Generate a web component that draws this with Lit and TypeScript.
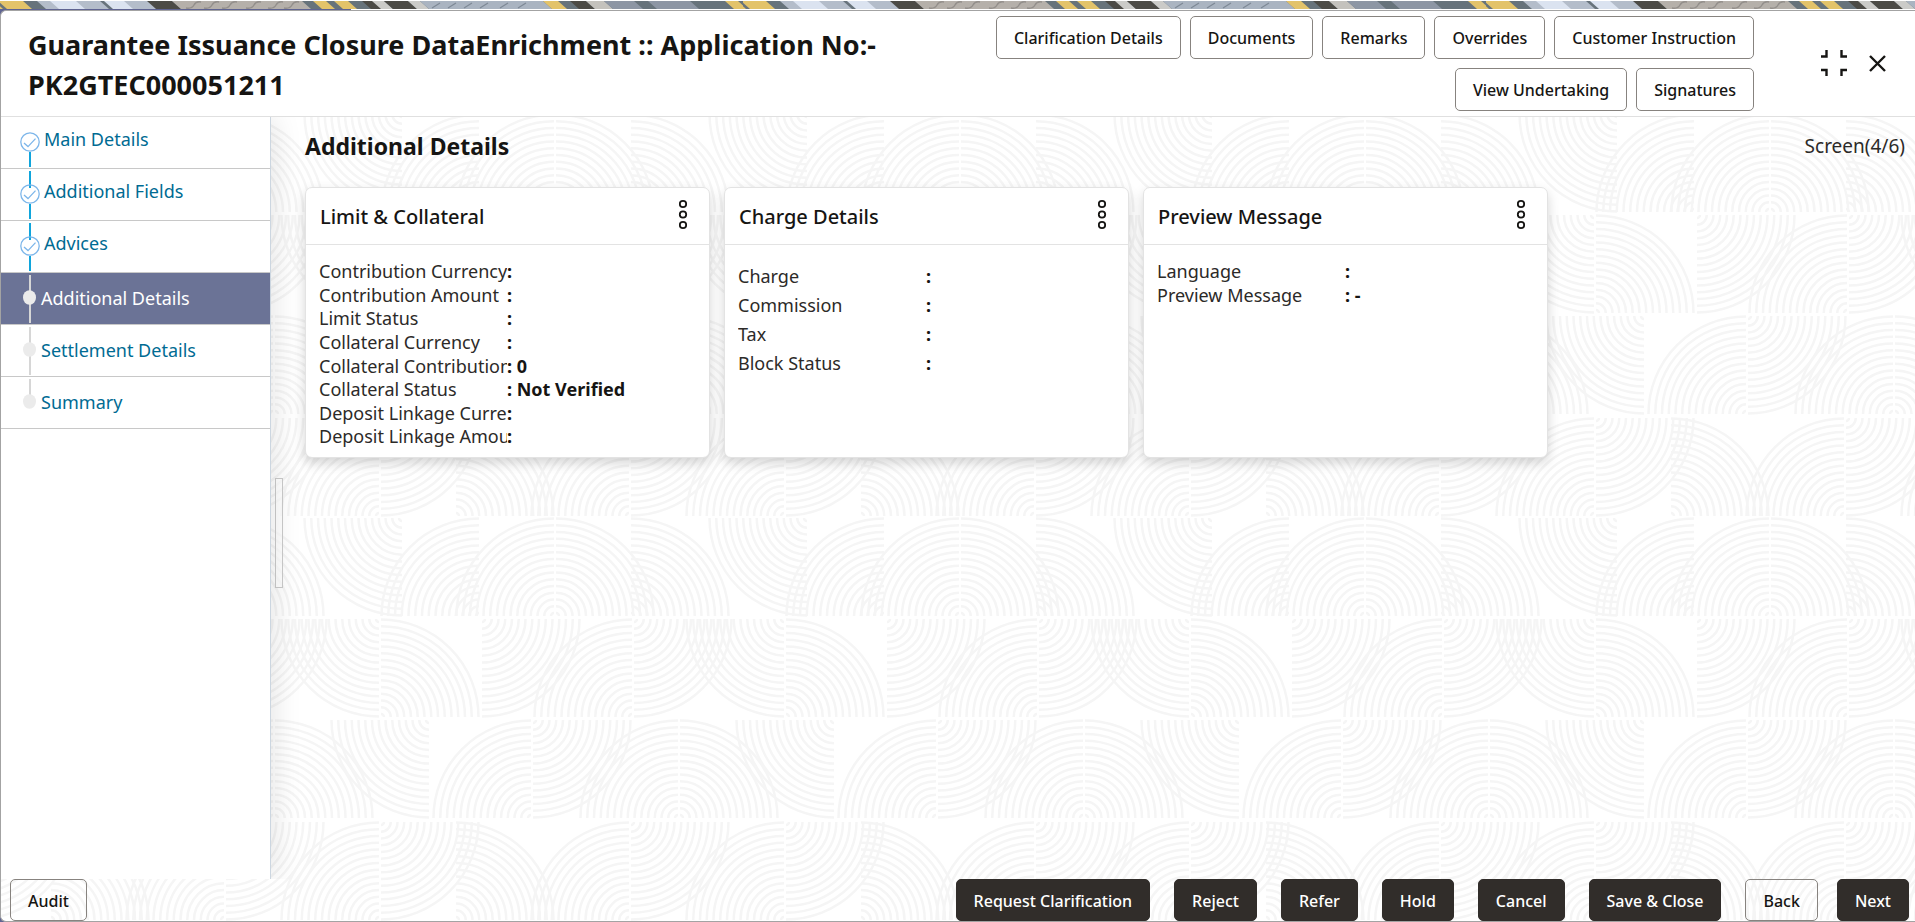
import { LitElement, html, svg, css, nothing } from "lit";
import { customElement, property } from "lit/decorators.js";
import { classMap } from "lit/directives/class-map.js";

type StepState = "done" | "active" | "pending";
interface Step { label: string; state: StepState }
interface Row { label: string; value: string }
interface Card { title: string; rows: Row[]; roomy?: boolean }

const STEPS: Step[] = [
  { label: "Main Details", state: "done" },
  { label: "Additional Fields", state: "done" },
  { label: "Advices", state: "done" },
  { label: "Additional Details", state: "active" },
  { label: "Settlement Details", state: "pending" },
  { label: "Summary", state: "pending" },
];

const CARDS: Card[] = [
  {
    title: "Limit & Collateral",
    rows: [
      { label: "Contribution Currency", value: "" },
      { label: "Contribution Amount", value: "" },
      { label: "Limit Status", value: "" },
      { label: "Collateral Currency", value: "" },
      { label: "Collateral Contribution", value: "0" },
      { label: "Collateral Status", value: "Not Verified" },
      { label: "Deposit Linkage Currency", value: "" },
      { label: "Deposit Linkage Amount", value: "" },
    ],
  },
  {
    title: "Charge Details",
    roomy: true,
    rows: [
      { label: "Charge", value: "" },
      { label: "Commission", value: "" },
      { label: "Tax", value: "" },
      { label: "Block Status", value: "" },
    ],
  },
  {
    title: "Preview Message",
    rows: [
      { label: "Language", value: "" },
      { label: "Preview Message", value: "-" },
    ],
  },
];

const TOOLBAR = [
  "Clarification Details", "Documents", "Remarks", "Overrides",
  "Customer Instruction", "View Undertaking", "Signatures",
];
const ACTIONS = ["Request Clarification", "Reject", "Refer", "Hold", "Cancel", "Save & Close"];

/* Quarter fans of the backdrop: centre x, centre y, direction of each axis. */
const TILE = 405;
const FANS: [number, number, number, number][] = [
  [112, 1, -1, 1], [189, 99, -1, -1], [264, 99, -1, -1], [266, 99, 1, -1], [341, 99, 1, -1],
  [89, 102, -1, 1], [91, 200, 1, -1], [192, 102, 1, 1], [342, 200, -1, -1], [344, 102, 1, 1],
  [139, 203, -1, 1], [241, 301, -1, -1], [243, 203, 1, 1], [388, 301, -1, -1], [390, 301, 1, -1],
  [89, 403, -1, -1], [91, 305, 1, 1], [166, 403, 1, -1], [339, 403, -1, -1], [341, 305, 1, 1],
];
const RADII = Array.from({ length: 15 }, (_, i) => 3 + i * 6.75);

@customElement("line-backdrop")
class LineBackdrop extends LitElement {
  static styles = css`
    :host { display: block; overflow: hidden; }
    .art { display: block; width: 100%; height: 100%; }
    .arc { fill: none; stroke: #f5f5f5; stroke-width: 2.5; }
  `;
  render() {
    const fan = ([x, y, sx, sy]: number[], shift: number) => svg`
      <g transform="translate(${x + shift} ${y}) scale(${sx} ${sy})">
        ${RADII.map(r => svg`<path class="arc" d="M${r} 0A${r} ${r} 0 0 1 0 ${r}"></path>`)}
      </g>`;
    return html`
      <svg class="art" aria-hidden="true">
        <defs>
          <pattern id="fans" x="289" y="-4" width=${TILE} height="404" patternUnits="userSpaceOnUse">
            ${FANS.map(f => [fan(f, 0), fan(f, -TILE), fan(f, TILE)])}
          </pattern>
        </defs>
        <rect width="100%" height="100%" fill="url(#fans)"></rect>
      </svg>`;
  }
}

/* Slanted bands of the banner strip: start, end, colour. */
const BANDS: [number, number, string][] = [
  [-18, -6, "#e3c36a"], [-2, 23, "#e3c36a"], [37, 100, "#b4bdca"], [50, 76, "#dbe3f0"],
  [104, 128, "#dbe3f0"], [124, 150, "#b4bdca"], [147, 172, "#4c4b46"], [172, 302, "#b5b0aa"],
  [313, 326, "#e3c36a"], [334, 348, "#e3c36a"], [362, 374, "#4c4b46"], [372, 384, "#cbcbc8"],
  [384, 408, "#4c4b46"], [408, 420, "#cbcbc8"], [420, 543, "#aab4c1"], [543, 558, "#e3c36a"],
  [570, 586, "#4c4b46"], [586, 604, "#c4c2bd"], [604, 634, "#8d96a4"], [648, 690, "#8d96a4"],
  [725, 738, "#e3c36a"],
];

@customElement("banner-strip")
class BannerStrip extends LitElement {
  static styles = css`
    :host { display: block; height: 9px; padding-top: 1px; background: #fff; box-sizing: border-box; }
    .art { display: block; width: 100%; height: 8px; }
    .mark { fill: none; stroke: #938f8b; stroke-width: 1.4; }
    .dash { stroke: #7e8996; stroke-width: 1.2; }
  `;
  render() {
    return html`
      <svg class="art" aria-hidden="true">
        <defs>
          <pattern id="bands" width="743" height="8" patternUnits="userSpaceOnUse">
            <rect width="743" height="8" fill="#67737b"></rect>
            ${BANDS.map(([a, b, c]) => svg`<path d="M${a} 0H${b}L${b + 9} 8H${a + 9}Z" fill=${c}></path>`)}
            ${[186, 204, 222, 246, 268, 284].map(x => svg`<path class="mark" d="M${x} 7q6 1 8-3t7-3"></path>`)}
            ${[432, 448, 464, 480, 500, 518].map(x => svg`<path class="dash" d="M${x} 7l8-5"></path>`)}
          </pattern>
        </defs>
        <rect width="100%" height="8" fill="url(#bands)"></rect>
      </svg>`;
  }
}

@customElement("step-item")
class StepItem extends LitElement {
  @property() label = "";
  @property() state: StepState = "pending";
  @property({ type: Boolean }) first = false;
  @property({ type: Boolean }) last = false;

  static styles = css`
    :host { display: block; }
    .step {
      display: flex; height: 51px; padding-left: 19px; border-bottom: 1px solid #c8c8c8;
      font-size: 18px; line-height: 24px; color: #006b93; text-decoration: none;
    }
    .text { padding: 13px 0 0 1px; }
    .done .text { padding: 10px 0 0 4px; }
    .active { background: #6b7396; color: #fff; }
    .mark { flex: none; }
    .rail { stroke: #d6d6d6; stroke-width: 2; }
    .done .rail { stroke: #10a5dc; }
    .dot { fill: #ebebeb; }
    .ring { fill: none; stroke: #7db6ea; stroke-width: 1.3; }
  `;
  render() {
    const done = this.state === "done";
    return html`
      <a href="#" class=${classMap({ step: true, [this.state]: true })}
         aria-current=${this.state === "active" ? "step" : nothing}>
        <svg class="mark" width="20" height="51" aria-hidden="true">
          ${done
            ? svg`
              ${this.first ? nothing : svg`<path class="rail" d="M10 2V19"></path>`}
              <path class="rail" d="M10 35V50"></path>
              <circle class="ring" cx="10" cy="25" r="9.2"></circle>
              <path class="ring" d="M4 26l4 3.6 7.500-8"></path>`
            : svg`
              <path class="rail" d="M10 2V${this.last ? 20 : 50}"></path>
              <ellipse class="dot" cx="9.500" cy="24.500" rx="6.500" ry="7.300"></ellipse>`}
        </svg>
        <span class="text">${this.label}</span>
      </a>`;
  }
}

@customElement("summary-card")
class SummaryCard extends LitElement {
  @property({ attribute: false }) card!: Card;

  static styles = css`
    :host {
      display: flex; flex-direction: column; box-sizing: border-box; min-height: 270px;
      background: #fff; border: 1px solid #e3e3e3; border-radius: 7px;
      box-shadow: 0 5px 12px rgba(0, 0, 0, 0.17);
    }
    .head {
      display: flex; justify-content: space-between; align-items: flex-start;
      height: 56px; padding: 0 14px; border-bottom: 1px solid #e3e3e3;
    }
    .title { margin: 14px 0 0; font-size: 20px; line-height: 30px; font-weight: 500; }
    .menu { margin-top: 8px; padding: 0; border: 0; background: none; display: flex; }
    .bead { fill: none; stroke: #161513; stroke-width: 1.8; }
    .rows {
      display: grid; grid-template-rows: repeat(8, 1fr); height: 189px;
      margin: 0; padding: 15px 14px 6px 13px; font-size: 18px; line-height: 23px;
    }
    .row { display: grid; grid-template-columns: 188px 1fr; }
    .roomy { display: block; padding-top: 17px; line-height: 29px; }
    .label { overflow: hidden; white-space: nowrap; color: #2c2a28; }
    .value { margin: 0; font-weight: 700; white-space: pre; }
  `;
  render() {
    const { title, rows, roomy } = this.card;
    return html`
      <header class="head">
        <h3 class="title">${title}</h3>
        <button class="menu" type="button" aria-label="${title} options">
          <svg width="24" height="36" aria-hidden="true">
            ${[8, 18.5, 29].map(y => svg`<ellipse class="bead" cx="12" cy=${y} rx="3.200" ry="3.100"></ellipse>`)}
          </svg>
        </button>
      </header>
      <dl class=${classMap({ rows: true, roomy: !!roomy })}>
        ${rows.map(r => html`
          <div class="row"><dt class="label">${r.label}</dt><dd class="value">${": " + r.value}</dd></div>`)}
      </dl>`;
  }
}

@customElement("app-root")
class AppRoot extends LitElement {
  static styles = css`
    :host {
      display: flex; flex-direction: column; min-height: 100vh; box-sizing: border-box;
      background: linear-gradient(90deg, #5f6492 351px, #fff 351px);
      font-family: "Noto Sans", "Open Sans", sans-serif; color: #161513;
    }
    .dialog {
      flex: 1; display: flex; flex-direction: column; margin-top: 1px; overflow: hidden;
      border: 1px solid #a3a3a3; border-right: 0; border-radius: 6px 0 0 6px; background: #fff;
    }
    .top {
      display: flex; align-items: flex-start; height: 105px; border-bottom: 1px solid #e0e0e0;
    }
    .title {
      flex: 1; margin: 0; padding: 14px 40px 0 27px;
      font-size: 27px; line-height: 40px; font-weight: 700;
    }
    .tools {
      flex: 0 0 40%; display: flex; flex-wrap: wrap; justify-content: flex-end;
      gap: 9px; padding-top: 5px;
    }
    .window { display: flex; gap: 18px; padding: 36px 23px 0 64px; }
    .icon { width: 32px; height: 32px; padding: 0; border: 0; background: none; }
    .icon.narrow { width: 24px; }
    .glyph { display: block; fill: none; stroke: #161513; stroke-width: 2.4; }

    .btn {
      box-sizing: border-box; height: 43px; padding: 0 17px; border: 1px solid #87837f;
      border-radius: 5px; background: transparent; color: #161513;
      font: 500 16px/24px "Noto Sans", "Open Sans", sans-serif; white-space: nowrap;
    }
    .btn.low { height: 42px; padding-top: 2px; }
    .btn.solid { background: #312d2a; border-color: #312d2a; color: #fff; }

    .stage { flex: 1; display: flex; flex-direction: column; position: relative; z-index: 0; }
    .backdrop { position: absolute; inset: 0; z-index: -1; }
    .body { flex: 1; display: flex; }
    .side {
      flex: none; width: 269px; background: #fff; border-right: 1px solid #ccd6e0;
      box-shadow: 4px 0 26px rgba(0, 0, 0, 0.1); clip-path: inset(0 -40px 0 0);
    }
    .splitter { flex: none; box-sizing: border-box; padding: 361px 0 0 4px; width: 34px; }
    .grip { width: 6px; height: 108px; border: 1px solid #cbcbcb; background: #fff9; }
    .main { flex: 1; padding-right: 10px; }
    .bar { display: flex; justify-content: space-between; align-items: center; height: 58px; margin-bottom: 12px; }
    .heading { margin: 0; font-size: 23px; line-height: 30px; font-weight: 700; }
    .screen { font-size: 19px; line-height: 24px; color: #2c2a28; }
    .cards { display: grid; grid-template-columns: repeat(3, 405px); gap: 14px; }

    .foot { display: flex; justify-content: space-between; padding: 0 6px 0 9px; }
    .actions { display: flex; gap: 24px; }
    .pair { display: flex; gap: 19px; }
  `;

  render() {
    return html`
      <banner-strip></banner-strip>
      <section class="dialog">
        <header class="top">
          <h1 class="title">Guarantee Issuance Closure DataEnrichment :: Application No:- PK2GTEC000051211</h1>
          <div class="tools">
            ${TOOLBAR.map(t => html`<button class="btn" type="button">${t}</button>`)}
          </div>
          <div class="window">
            <button class="icon" type="button" aria-label="Collapse">
              <svg class="glyph" width="32" height="32" aria-hidden="true">
                <path d="M3 9.500H8.500V3M29 9.500H23.500V3M3 23H8.500V29M29 23H23.500V29"></path>
              </svg>
            </button>
            <button class="icon narrow" type="button" aria-label="Close">
              <svg class="glyph" width="24" height="32" aria-hidden="true">
                <path d="M2 9L17 24M17 9L2 24"></path>
              </svg>
            </button>
          </div>
        </header>
        <div class="stage">
          <line-backdrop class="backdrop"></line-backdrop>
          <div class="body">
            <nav class="side" aria-label="Steps">
              ${STEPS.map((s, i) => html`
                <step-item .label=${s.label} .state=${s.state}
                  ?first=${i === 0} ?last=${i === STEPS.length - 1}></step-item>`)}
            </nav>
            <div class="splitter"><div class="grip"></div></div>
            <main class="main">
              <div class="bar">
                <h2 class="heading">Additional Details</h2>
                <span class="screen">Screen(4/6)</span>
              </div>
              <div class="cards">
                ${CARDS.map(c => html`<summary-card .card=${c}></summary-card>`)}
              </div>
            </main>
          </div>
          <footer class="foot">
            <button class="btn low" type="button">Audit</button>
            <div class="actions">
              ${ACTIONS.map(a => html`<button class="btn low solid" type="button">${a}</button>`)}
              <div class="pair">
                <button class="btn low" type="button">Back</button>
                <button class="btn low solid" type="button">Next</button>
              </div>
            </div>
          </footer>
        </div>
      </section>`;
  }
}
